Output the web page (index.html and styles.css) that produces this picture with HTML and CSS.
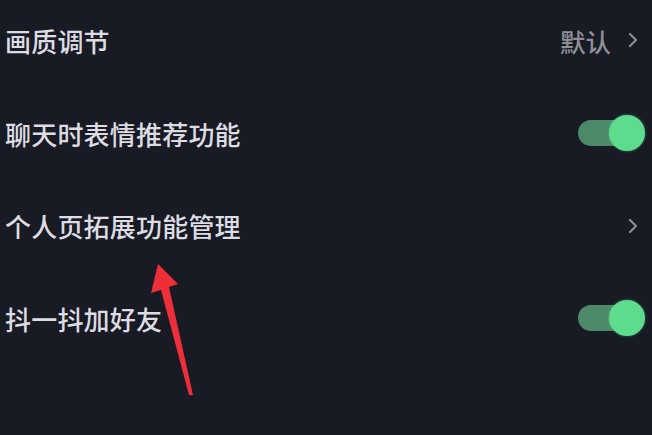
FILE: index.html
```html
<!DOCTYPE html>
<html lang="zh">
<head>
<meta charset="utf-8">
<link rel="stylesheet" href="styles.css">
</head>
<body>
<div class="screen">
  <div class="list">
    <div class="row">
      <span class="label">画质调节</span>
      <span class="right">
        <span class="value">默认</span>
        <svg class="chev" width="12" height="16" viewBox="0 0 12 16"><path d="M3 2 L9 8 L3 14" fill="none" stroke="#8b8b93" stroke-width="2.2" stroke-linecap="round" stroke-linejoin="round"/></svg>
      </span>
    </div>
    <div class="row">
      <span class="label">聊天时表情推荐功能</span>
      <span class="toggle"><span class="track"></span><span class="knob"></span></span>
    </div>
    <div class="row">
      <span class="label">个人页拓展功能管理</span>
      <span class="right">
        <svg class="chev" width="12" height="16" viewBox="0 0 12 16"><path d="M3 2 L9 8 L3 14" fill="none" stroke="#8b8b93" stroke-width="2.2" stroke-linecap="round" stroke-linejoin="round"/></svg>
      </span>
    </div>
    <div class="row">
      <span class="label">抖一抖加好友</span>
      <span class="toggle"><span class="track"></span><span class="knob"></span></span>
    </div>
  </div>
  <svg class="arrow" width="652" height="435" viewBox="0 0 652 435">
    <polygon points="158,264 178,284 169,287 193,395 189,395 161,290 151,293" fill="#ee2f3a"/>
  </svg>
</div>
</body>
</html>
```

FILE: styles.css
```css
html, body {
  margin: 0;
  padding: 0;
  background: #181a24;
}
.screen {
  position: relative;
  width: 652px;
  height: 435px;
  overflow: hidden;
  background: #181a24;
  font-family: "Noto Sans CJK SC", "Noto Sans", sans-serif;
}
.list {
  display: flex;
  flex-direction: column;
  margin-top: -6px;
}
.row {
  height: 92.7px;
  display: flex;
  align-items: center;
  justify-content: space-between;
  padding: 0 7px 0 5px;
}
.label {
  color: #dcdce2;
  font-size: 26px;
  font-weight: 500;
  letter-spacing: 0.2px;
}
.right {
  display: flex;
  align-items: center;
  margin-right: 6px;
}
.value {
  color: #8f8f97;
  font-size: 25.5px;
  font-weight: 500;
  margin-right: 16px;
}
.chev {
  display: block;
}
.toggle {
  position: relative;
  width: 67px;
  height: 36px;
  display: block;
}
.track {
  position: absolute;
  left: 0;
  top: 5px;
  width: 56px;
  height: 26px;
  border-radius: 13px;
  background: #4c8a69;
}
.knob {
  position: absolute;
  right: 0;
  top: 0;
  width: 36px;
  height: 36px;
  border-radius: 50%;
  background: #5edc8e;
  box-shadow: 0 0 3px rgba(95, 227, 146, 0.5);
}
.arrow {
  position: absolute;
  left: 0;
  top: 0;
}
```
